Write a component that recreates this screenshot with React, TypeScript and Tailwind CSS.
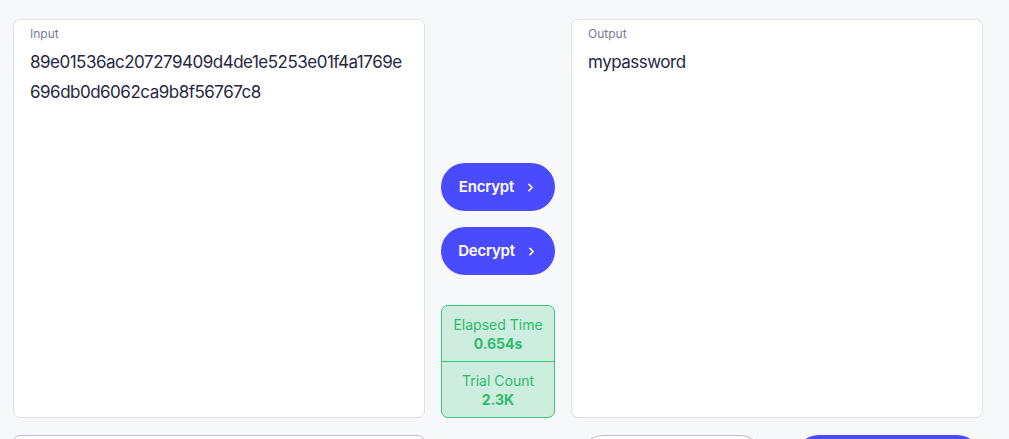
import { ChevronRight } from 'lucide-react'

const font = { fontFamily: 'Inter, "Noto Sans", sans-serif' }

function Panel({ label, value }: { label: string; value: string }) {
  return (
    <div className="flex flex-col h-[399px] rounded-[7px] border border-[#e1e1ee] bg-white px-[16px] pt-[6px]">
      <div className="text-[12px] leading-[16px] text-[#7a7a90]">{label}</div>
      <div className="mt-[5px] text-[17px] leading-[30px] text-[#27273f] break-all tracking-[-0.5px]">{value}</div>
    </div>
  )
}

function ActionButton({ label }: { label: string }) {
  return (
    <button className="flex h-[48px] w-full items-center justify-center gap-[10px] rounded-full bg-[#4a4aff] text-[15px] font-semibold tracking-[-0.2px] text-white">
      {label}
      <ChevronRight size={13} strokeWidth={3} />
    </button>
  )
}

export default function App() {
  return (
    <div className="h-[439px] w-full overflow-hidden bg-[#f7f8fa] pl-[13px] pt-[19px]" style={font}>
      <div className="grid grid-cols-[412px_114px_412px] gap-x-[16px] gap-y-[17px]">
        <Panel label="Input" value="89e01536ac207279409d4de1e5253e01f4a1769e696db0d6062ca9b8f56767c8" />

        <div className="flex flex-col justify-end">
          <div className="flex flex-col gap-[16px]">
            <ActionButton label="Encrypt" />
            <ActionButton label="Decrypt" />
          </div>
          <div className="mt-[30px] flex flex-col rounded-[7px] border border-[#3cc47c] bg-[#cdeedf] text-center text-[14px] text-[#2dbb6c]">
            <div className="flex h-[56px] flex-col justify-center border-b border-[#3cc47c]">
              <div className="leading-[20px]">Elapsed Time</div>
              <div className="font-bold leading-[18px]">0.654s</div>
            </div>
            <div className="flex h-[55px] flex-col justify-center">
              <div className="leading-[20px]">Trial Count</div>
              <div className="font-bold leading-[18px]">2.3K</div>
            </div>
          </div>
        </div>

        <Panel label="Output" value="mypassword" />

        <div className="h-[48px] rounded-[7px] border border-[#bcbad8] bg-white" />
        <div />
        <div className="flex gap-[31px] pl-[8px]">
          <button className="h-[48px] w-[185px] rounded-full border border-[#bcbad8] bg-white" />
          <button className="h-[48px] w-[186px] rounded-full bg-[#4a4aff]" />
        </div>
      </div>
    </div>
  )
}
